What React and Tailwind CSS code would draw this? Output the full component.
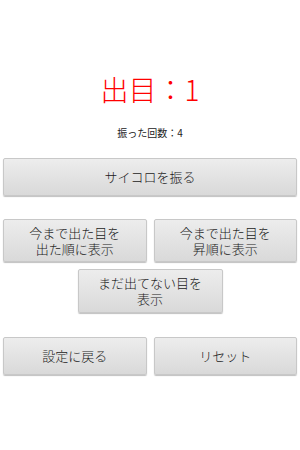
const font = { fontFamily: '"Noto Sans CJK JP", "Noto Sans", sans-serif' };

const btn =
    'flex items-center justify-center rounded-[2px] border border-[#c8c8c8] bg-gradient-to-b from-[#ededed] to-[#d9d9d9] shadow-[0_1px_1px_rgba(0,0,0,0.25)] text-[13px] leading-[16px] font-light text-[#1a1a1a] text-center';

export default function App() {
    return (
        <div className="w-[300px] h-[450px] bg-white flex flex-col" style={font}>
            <div className="h-[77px]" />
            <div className="text-[28px] leading-[24px] font-light text-[#ff0000] text-center h-[24px]">出目：1</div>
            <div className="h-[26px]" />
            <div className="text-[10px] leading-[12px] text-[#222] text-center">振った回数：4</div>
            <div className="h-[19px]" />

            <div className="px-[3px]">
                <button className={`${btn} w-full h-[38px]`}>サイコロを振る</button>
            </div>

            <div className="h-[23px]" />
            <div className="px-[3px] flex gap-[7px]">
                <button className={`${btn} flex-1 h-[43px]`}>
                    <span className="flex flex-col">
                        <span>今まで出た目を</span>
                        <span>出た順に表示</span>
                    </span>
                </button>
                <button className={`${btn} flex-1 h-[43px]`}>
                    <span className="flex flex-col">
                        <span>今まで出た目を</span>
                        <span>昇順に表示</span>
                    </span>
                </button>
            </div>
            <div className="h-[7px]" />
            <div className="flex justify-center">
                <button className={`${btn} w-[145px] h-[44px]`}>
                    <span className="flex flex-col">
                        <span>まだ出てない目を</span>
                        <span>表示</span>
                    </span>
                </button>
            </div>

            <div className="h-[24px]" />
            <div className="px-[3px] flex gap-[7px]">
                <button className={`${btn} flex-1 h-[38px]`}>設定に戻る</button>
                <button className={`${btn} flex-1 h-[38px]`}>リセット</button>
            </div>
        </div>
    );
}
